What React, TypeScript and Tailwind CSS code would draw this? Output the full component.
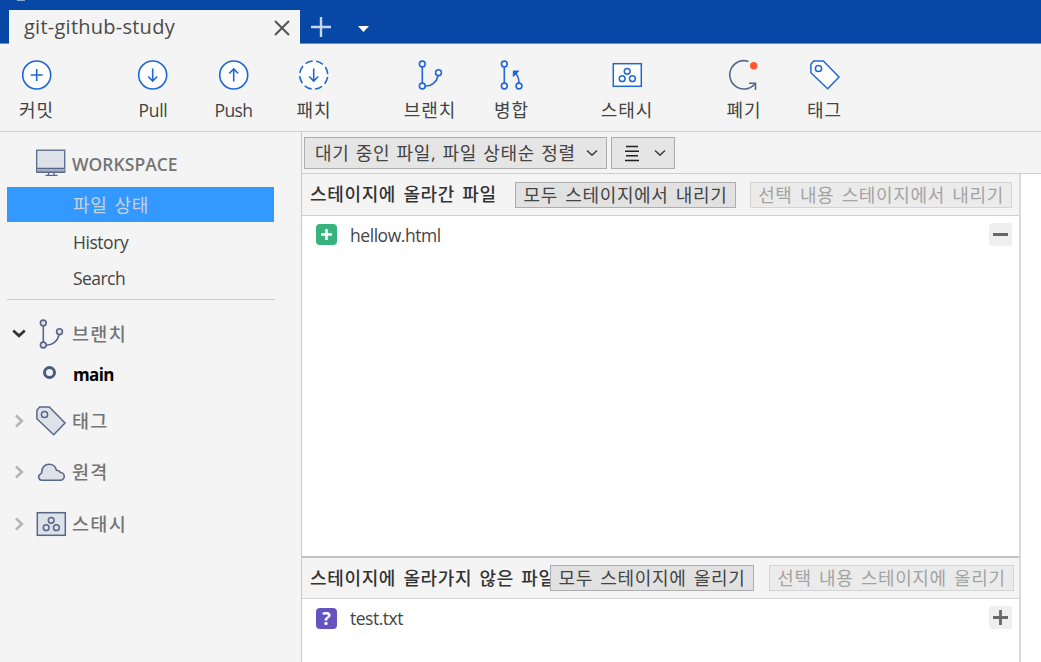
import React from "react";

const BLUE = "#1f66d6";
const SLATE = "#56678a";

type GlyphProps = { color?: string; fill?: string };

function Svg({ children, color = BLUE, w = 1.5 }: { children: React.ReactNode; color?: string; w?: number }) {
  return (
    <svg className="block size-[30px] shrink-0 overflow-visible" viewBox="0 0 30 30" fill="none" stroke={color} strokeWidth={w}>
      {children}
    </svg>
  );
}

function CircleGlyph({ d, dashed }: { d: string; dashed?: boolean }) {
  return (
    <Svg w={1.6}>
      <circle cx="14.700" cy="15" r="14" fill="#fff" strokeDasharray={dashed ? "7.500 3.500" : undefined} strokeDashoffset={dashed ? 9 : 0} />
      <path d={d} transform="translate(-.3 0)" />
    </Svg>
  );
}

function Branch({ color = BLUE, fill = "#fff" }: GlyphProps) {
  return (
    <Svg color={color} w={1.6}>
      <path d="M7.300 7v16M10.300 26.200C16.500 26 21.700 22 23 16" />
      <g fill={fill}>
        <circle cx="7.300" cy="4" r="2.900" />
        <circle cx="7.300" cy="26" r="2.900" />
        <circle cx="23.500" cy="12.700" r="2.900" />
      </g>
    </Svg>
  );
}

function Merge() {
  return (
    <Svg w={1.6}>
      <path d="M7.300 7v16M22 23c0-5-1.200-8-4.500-10.600" />
      <path d="M16.300 16.500v-5.500h5.500z" fill={BLUE} strokeWidth="1" />
      <circle cx="7.300" cy="4" r="2.900" fill="#fff" />
      <circle cx="7.300" cy="26" r="2.900" fill="#fff" />
      <circle cx="22" cy="26" r="2.900" fill="#fff" />
    </Svg>
  );
}

function Stash({ color = BLUE, fill = "#fff" }: GlyphProps) {
  return (
    <Svg color={color}>
      <rect x="1.300" y="3.700" width="28" height="22.600" fill={fill} />
      <circle cx="15.200" cy="11.300" r="2.900" />
      <circle cx="10.200" cy="18.700" r="2.900" />
      <circle cx="20.400" cy="18.700" r="2.900" />
    </Svg>
  );
}

function Discard() {
  return (
    <Svg color={SLATE} w={1.6}>
      <path d="M19.500 1.400A14.200 14.200 0 1 0 26 23.800" />
      <path d="M20 23.300h6.500v6.700" />
      <circle cx="24.700" cy="5.700" r="3.700" fill="#ff5630" stroke="none" />
    </Svg>
  );
}

function Tag({ color = BLUE, fill = "#fff" }: GlyphProps) {
  return (
    <Svg color={color}>
      <path d="M3.700 1h9.600L29 17 17.700 28.700.900 12.700V4.300z" fill={fill} />
      <circle cx="8.500" cy="8.500" r="3.100" />
    </Svg>
  );
}

function Monitor() {
  return (
    <Svg color={SLATE} w={1.3}>
      <rect x="1.700" y="2.200" width="28" height="22" fill="#dfe1e8" />
      <path d="M2 21.700h27.500" strokeWidth="3.500" stroke="#a5afc2" />
      <path d="M2 20.300h27.500M1.700 24.200h28M10.500 27.400h12M13.500 24.500v2.500M19 24.500v2.500" />
    </Svg>
  );
}

function Cloud() {
  return (
    <Svg color={SLATE} w={1.6}>
      <path d="M5.700 23.300h18.500a3.900 3.900 0 0 0 .300-7.800 4.600 4.600 0 0 0-4-2.300C19.500 9.300 16.700 7.200 13.200 7.200c-4.500 0-7.600 3.300-7.400 7.900-.100.900-.500 1.300-1.100 1.800-1.600.8-2.200 2-2 3.500.300 1.700 1.400 2.900 3 2.900z" fill="#dfe1e8" />
    </Svg>
  );
}

function Chevron({ open }: { open?: boolean }) {
  return (
    <svg className="block size-[14px] shrink-0" viewBox="0 0 14 14" fill="none" stroke={open ? "#333" : "#b4b4b4"} strokeWidth="2.700">
      <path d={open ? "M1.200 3.500 7 8.800l5.800-5.300" : "M4 1.400 9.800 7l-5.800 5.600"} />
    </svg>
  );
}

function Caret() {
  return (
    <svg className="block h-[8px] w-[12px] shrink-0" viewBox="0 0 12 8" fill="none" stroke="#444" strokeWidth="1.600">
      <path d="M1 1.500 6 6.200l5-4.700" />
    </svg>
  );
}

function Tool({ label, icon, className }: { label: string; icon: React.ReactNode; className: string }) {
  return (
    <button className={`flex shrink-0 flex-col items-center pt-4 text-[#444] ${className}`}>
      {icon}
      <span className="mt-[7px] leading-[26px] whitespace-nowrap">{label}</span>
    </button>
  );
}

function Section({ label, icon, open, className }: { label: string; icon: React.ReactNode; open?: boolean; className: string }) {
  return (
    <div className={`flex items-center pl-3 font-medium text-[#757575] ${className}`}>
      <Chevron open={open} />
      <span className="ml-[10px]">{icon}</span>
      <span className="ml-[6px] text-[18.500px] tracking-[1.3px]">{label}</span>
    </div>
  );
}

function Btn({ label, disabled, className }: { label: string; disabled?: boolean; className: string }) {
  return (
    <button
      className={`relative flex h-[26px] shrink-0 items-center justify-center border text-[18px] leading-[24px] tracking-[0.65px] whitespace-nowrap [word-spacing:2px] ${
        disabled ? "border-[#d4d4d4] bg-[#ebebeb] text-[#a3a3a3]" : "border-[#adadad] bg-[#e1e1e1] text-[#444]"
      } ${className}`}
    >
      {label}
    </button>
  );
}

function FileRow({ name, badge, action, tracking }: { name: string; badge: React.ReactNode; action: string; tracking: string }) {
  return (
    <div className="flex h-[38px] items-center pr-[7px] pl-[14px]">
      {badge}
      <span className={`ml-[13px] flex-1 text-[17.500px] text-[#444] ${tracking}`}>{name}</span>
      <svg className="-mt-px block size-[23px] rounded-[3px] bg-[#efefef]" viewBox="0 0 23 23" stroke="#686868" strokeWidth="2.800">
        <path d={action} />
      </svg>
    </div>
  );
}

export default function App() {
  return (
    <div className="flex h-[662px] w-[1041px] flex-col overflow-hidden bg-[#f4f4f4] font-['Open_Sans','Noto_Sans_CJK_KR',sans-serif] text-[17px]">
      <header className="relative flex h-[44px] shrink-0 items-end border-b border-[#7d8ba8] bg-[#0747a6] pl-[9px]">
        <span className="absolute top-0 left-[17px] h-px w-[8px] bg-[#8fabd6]" />
        <div className="-mb-px flex h-[34px] w-[291px] items-center justify-between bg-[#f4f4f4] pr-[10px] pl-[15px]">
          <span className="text-[20px] tracking-[0.25px] text-[#4b4b4b]">git-github-study</span>
          <svg className="mt-[2px] block size-[16px]" viewBox="0 0 16 16" stroke="#555" strokeWidth="2.100">
            <path d="M1 1l14 14M15 1 1 15" />
          </svg>
        </div>
        <svg className="mb-[6px] ml-[11px] block size-[20px]" viewBox="0 0 20 20" stroke="#c8d6ec" strokeWidth="2.400">
          <path d="M10 0v20M0 10h20" />
        </svg>
        <svg className="mb-[11px] ml-[27px] block h-[6px] w-[11px]" viewBox="0 0 11 6" fill="#fff">
          <path d="M0 0h11L5.500 6z" />
        </svg>
      </header>

      <nav className="flex h-[88px] shrink-0 border-b border-[#cfcfcf] text-[18px]">
        <Tool label="커밋" className="w-[73px] tracking-[0.9px]" icon={<CircleGlyph d="M15 9v12M9 15h12" />} />
        <Tool label="Pull" className="ml-[40px] w-[80px] text-[17.500px] tracking-[-0.3px]" icon={<CircleGlyph d="M15 8.500v12.500M10.500 16.500 15 21l4.500-4.500" />} />
        <Tool label="Push" className="w-[81px] text-[17.500px] tracking-[-0.6px]" icon={<CircleGlyph d="M15 21.500V9M10.500 13.500 15 9l4.500 4.500" />} />
        <Tool label="패치" className="w-[80px] tracking-[0.9px]" icon={<CircleGlyph dashed d="M15 8.500v12.500M10.500 16.500 15 21l4.500-4.500" />} />
        <Tool label="브랜치" className="ml-[36px] w-[80px] tracking-[0.9px]" icon={<Branch />} />
        <Tool label="병합" className="w-[83px] tracking-[0.9px]" icon={<Merge />} />
        <Tool label="스태시" className="ml-[34px] w-[80px] tracking-[0.9px]" icon={<Stash />} />
        <Tool label="폐기" className="ml-[37px] w-[80px] tracking-[0.9px]" icon={<Discard />} />
        <Tool label="태그" className="w-[81px] tracking-[0.9px]" icon={<Tag />} />
      </nav>

      <div className="flex min-h-0 flex-1">
        <aside className="flex w-[301px] shrink-0 flex-col text-[18px] text-[#444]">
          <div className="flex h-[55px] items-center pt-[7px] pl-[35px] text-[#757575]">
            <Monitor />
            <span className="mt-[2px] ml-[7px] text-[17.500px] font-semibold tracking-[0.02px]">WORKSPACE</span>
          </div>
          <div className="ml-[7px] flex h-[35px] w-[267px] items-center bg-[#3399ff] pt-[2px] pl-[66px] tracking-[0.6px] text-[#c8d2de] [word-spacing:2px]">파일 상태</div>
          <div className="flex h-[40px] items-center pl-[73px] text-[17.500px] tracking-[-0.45px]">History</div>
          <div className="flex h-[33px] items-center pl-[73px] text-[17.500px] tracking-[-0.55px]">Search</div>
          <div className="mt-1 ml-[7px] w-[268px] border-t border-[#cbcbcb]" />
          <Section label="브랜치" open className="mt-[13px] h-[42px]" icon={<Branch color={SLATE} fill="#dfe1e8" />} />
          <div className="flex h-[40px] items-center pl-[43px] text-[17px] font-bold tracking-[-0.65px] text-black">
            <span className="mb-[5px] size-[13px] rounded-full border-[3px] border-[#4a5b7c] bg-[#f0f2f6]" />
            <span className="ml-[17px]">main</span>
          </div>
          <Section label="태그" className="h-[52px]" icon={<Tag color={SLATE} fill="#dfe1e8" />} />
          <Section label="원격" className="h-[50px]" icon={<Cloud />} />
          <Section label="스태시" className="h-[53px]" icon={<Stash color={SLATE} fill="#dfe1e8" />} />
        </aside>

        <main className="flex min-w-0 flex-1 flex-col border-l border-[#c8c8c8]">
          <div className="flex h-[42px] shrink-0 gap-1 border-b border-[#cfcfcf] pt-[5px] pl-[2px]">
            <button className="flex h-[32px] w-[303px] items-center justify-between border border-[#adadad] bg-[#e5e5e5] pr-[8px] pl-[10px] text-[18px] text-[#444]">
              <span className="tracking-[0.65px] whitespace-nowrap [word-spacing:1px]">대기 중인 파일, 파일 상태순 정렬</span>
              <Caret />
            </button>
            <button className="flex h-[32px] w-[64px] items-center justify-between border border-[#adadad] bg-[#e5e5e5] pr-[8px] pl-[13px]">
              <svg className="block h-[17px] w-[14px]" viewBox="0 0 14 17" stroke="#222" strokeWidth="1.600">
                <path d="M1 1.500h12M0 6.200h14M1 10.800h12M0 15.500h14" />
              </svg>
              <Caret />
            </button>
          </div>

          <div className="flex min-h-0 flex-1 bg-white">
            <div className="flex w-[719px] flex-col border-r-2 border-[#dadada]">
              <section className="flex h-[382px] shrink-0 flex-col">
                <div className="flex h-[42px] shrink-0 items-center border-b border-[#cfcfcf] bg-[#f4f4f4] pl-[8px]">
                  <h2 className="w-[205px] shrink-0 text-[18px] font-medium tracking-[0.65px] whitespace-nowrap text-[#333] [word-spacing:2px]">스테이지에 올라간 파일</h2>
                  <Btn label="모두 스테이지에서 내리기" className="w-[221px]" />
                  <Btn label="선택 내용 스테이지에서 내리기" disabled className="ml-[14px] w-[262px]" />
                </div>
                <FileRow
                  name="hellow.html"
                  tracking="tracking-[-0.45px]"
                  action="M4 11.500h15"
                  badge={
                    <svg className="-mt-px block size-[21px] rounded-[4px] bg-[#36b37e]" viewBox="0 0 21 21" stroke="#fff" strokeWidth="2.600">
                      <path d="M10.500 5v11M5 10.500h11" />
                    </svg>
                  }
                />
              </section>
              <section className="flex flex-1 flex-col border-t-2 border-[#c4c4c4]">
                <div className="flex h-[41px] shrink-0 items-center border-b border-[#d4d4d4] bg-[#f4f4f4] pl-[8px]">
                  <h2 className="w-[240px] shrink-0 text-[18px] font-medium tracking-[0.65px] whitespace-nowrap text-[#333] [word-spacing:2px]">스테이지에 올라가지 않은 파일</h2>
                  <Btn label="모두 스테이지에 올리기" className="w-[204px]" />
                  <Btn label="선택 내용 스테이지에 올리기" disabled className="ml-[15px] w-[245px]" />
                </div>
                <FileRow
                  name="test.txt"
                  tracking="tracking-[-0.5px]"
                  action="M4 11.500h15M11.500 4v15"
                  badge={<span className="flex size-[21px] items-center justify-center rounded-[4px] bg-[#6554c0] text-[18px] leading-[21px] font-bold text-white">?</span>}
                />
              </section>
            </div>
          </div>
        </main>
      </div>
    </div>
  );
}
